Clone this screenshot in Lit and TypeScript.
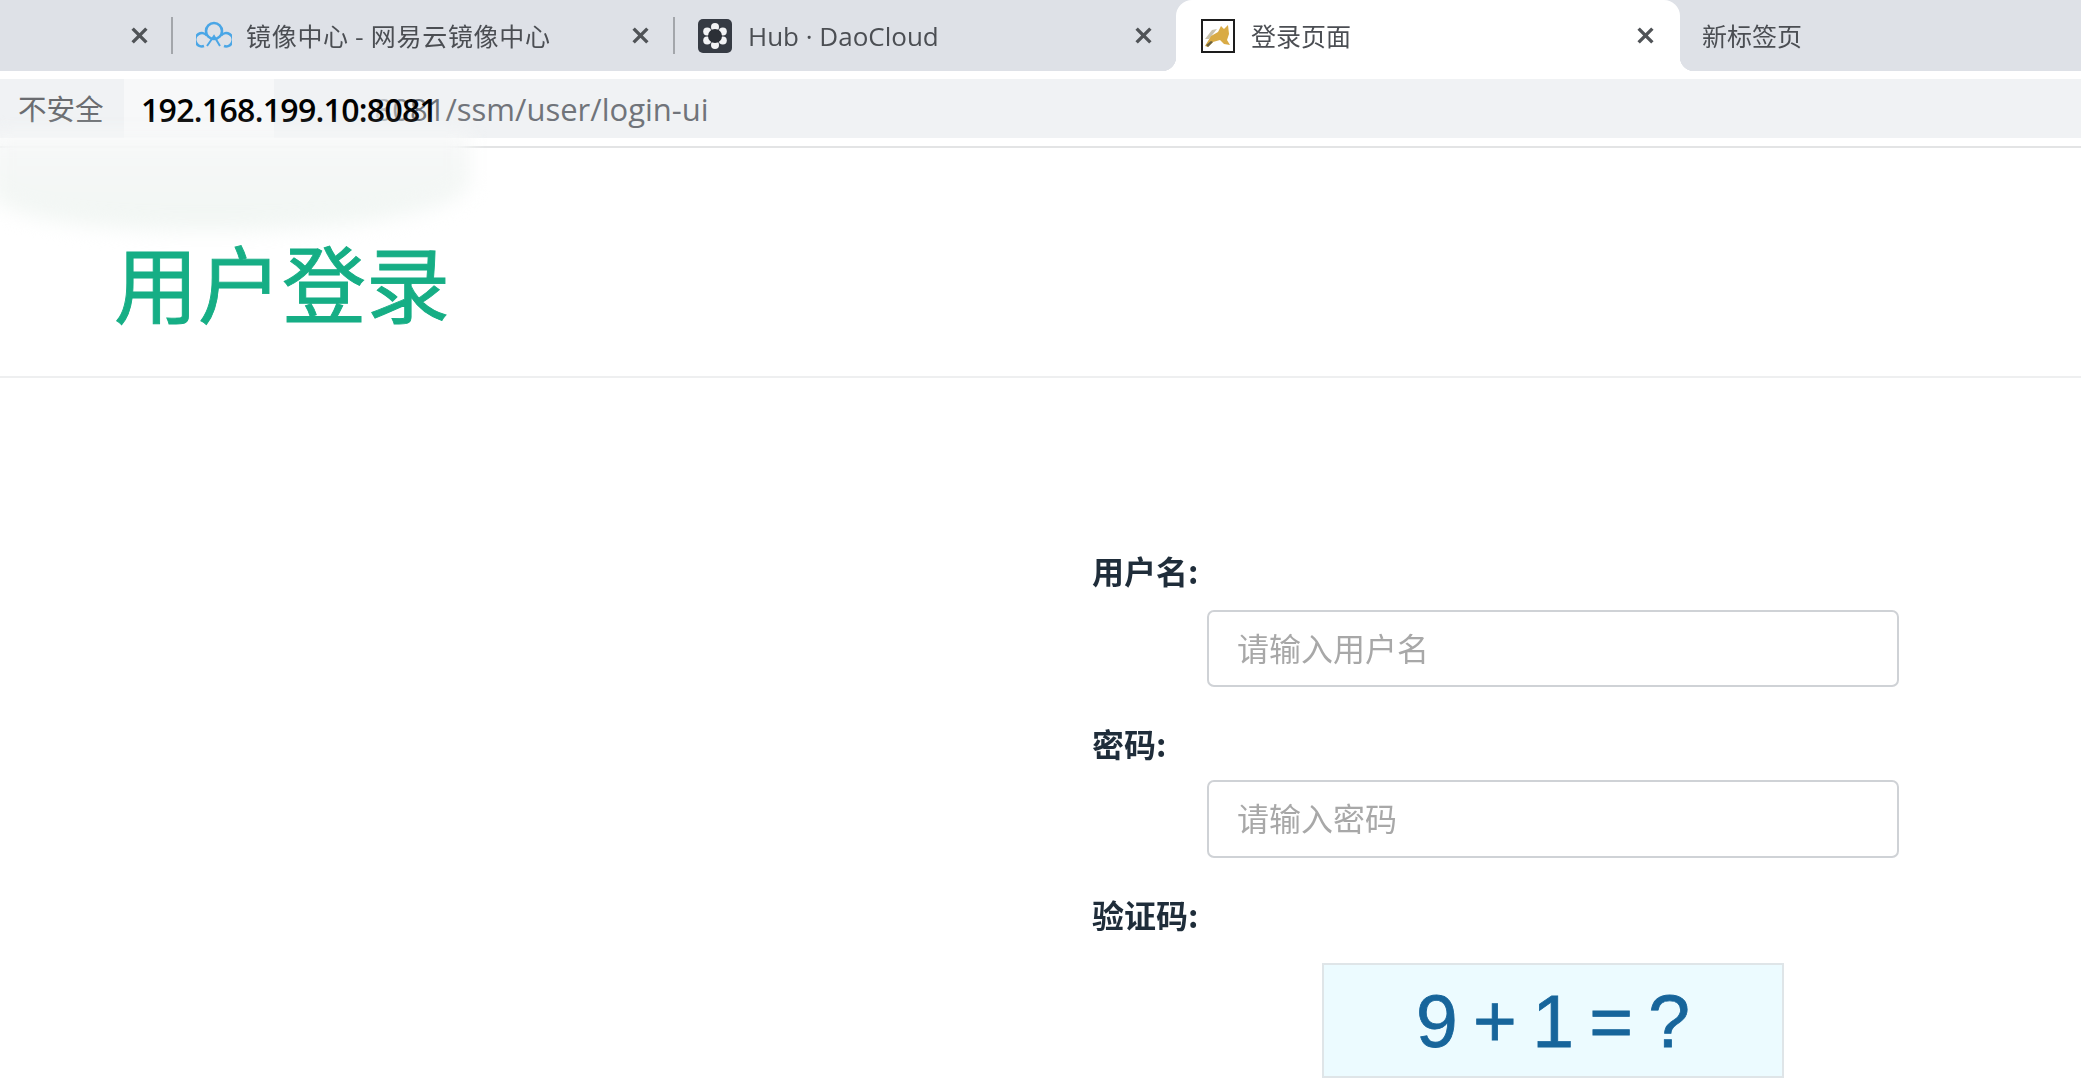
import { LitElement, html, css, svg } from "lit";
import { customElement } from "lit/decorators.js";

const closeIcon = svg`<svg class="x" viewBox="0 0 18 18" width="19" height="19"><path d="M2.5 2.5L15.5 15.5M15.5 2.5L2.5 15.5" stroke="#505357" stroke-width="3.2" fill="none"/></svg>`;

const cloudIcon = svg`<svg class="ico" viewBox="0 0 36 30" width="36" height="30" fill="none" stroke="#4aa6e6" stroke-width="2.6"><circle cx="18" cy="10" r="8"/><path d="M11 14.5A6.6 6.6 0 1 0 8 25"/><path d="M25 14.5A6.6 6.6 0 1 1 28 25"/><path d="M11 25L18 15L24 25" stroke-width="2"/></svg>`;

const hubIcon = svg`<svg class="ico" viewBox="0 0 34 34" width="34" height="34"><rect width="34" height="34" rx="5" fill="#363b44"/><g fill="#f2f3f5"><circle cx="17" cy="8" r="4"/><circle cx="9.2" cy="12.6" r="4"/><circle cx="24.8" cy="12.6" r="4"/><circle cx="9.2" cy="21.4" r="4"/><circle cx="24.8" cy="21.4" r="4"/><circle cx="17" cy="26" r="4"/></g><circle cx="17" cy="17" r="7" fill="#2b2f36"/></svg>`;

const catIcon = svg`<svg class="ico" viewBox="0 0 34 34" width="34" height="34"><rect x="1" y="1" width="32" height="32" fill="#fff" stroke="#1d1d1d" stroke-width="2"/><path d="M4 20L11 11L16 10L8 20Z" fill="#c9c2ac"/><path d="M4 27L10 17L17 13L20 7L23 10L27 6L28 15L26 21L29 26L23 25L19 21L12 23L7 28Z" fill="#d9ab45"/><path d="M7 28L12 23L10 22L5 26Z" fill="#6b6240"/></svg>`;

@customElement("app-root")
export class AppRoot extends LitElement {
  static styles = css`
    :host {
      display: block;
      position: relative;
      height: 1080px;
      overflow: hidden;
      background: #fff;
      font-family: "Noto Sans CJK SC", "Open Sans", sans-serif;
    }
    .page { filter: blur(0.7px); }
    .tabs {
      display: flex;
      align-items: center;
      height: 71px;
      background: #dee1e7;
      color: #4b4e53;
      font-size: 25px;
    }
    .tab {
      display: flex;
      align-items: center;
      height: 100%;
      box-sizing: border-box;
      padding-left: 23px;
      padding-right: 24px;
      flex: none;
      position: relative;
    }
    .tab .ico { flex: none; margin-right: 16px; }
    .tab .label { flex: 1; white-space: nowrap; line-height: 1; }
    .tab .x { flex: none; }
    .t1 { width: 171px; justify-content: flex-end; padding: 0 22px 0 0; }
    .t2 { width: 500px; padding-right: 23px; }
    .t2 .label { letter-spacing: 0.7px; }
    .t3 { width: 501px; padding-right: 23px; }
    .t4 { width: 504px; background: #fff; border-radius: 16px 16px 0 0; padding-left: 25px; padding-right: 25px; }
    .t4::before, .t4::after {
      content: "";
      position: absolute;
      bottom: 0;
      width: 14px;
      height: 14px;
    }
    .t4::before { left: -14px; background: radial-gradient(circle at 0 0, transparent 14px, #fff 14.5px); }
    .t4::after { right: -14px; background: radial-gradient(circle at 100% 0, transparent 14px, #fff 14.5px); }
    .t2 .ico { margin-right: 14px; }
    .t5 { flex: 1; padding-left: 22px; }
    .hub { font-family: "Open Sans", sans-serif; font-size: 26px; }
    .sep { width: 2px; height: 37px; background: #a3a6ab; flex: none; }
    .gap { height: 8px; background: #fff; }
    .bar {
      display: flex;
      align-items: center;
      height: 59px;
      background: #f0f2f4;
      position: relative;
      padding-left: 18px;
      font-size: 28.5px;
      color: #6a6c70;
    }
    .insecure { width: 129px; flex: none; line-height: 1; }
    .url { font-family: "Open Sans", sans-serif; font-size: 31px; white-space: nowrap; color: #70747a; }
    .host {
      position: absolute;
      left: 141px;
      top: 50%;
      transform: translateY(-50%);
      font-family: "Open Sans", sans-serif;
      font-size: 32px;
      font-weight: 600;
      letter-spacing: -0.7px;
      color: #000;
      white-space: nowrap;
    }
    .patch {
      position: absolute;
      left: 124px;
      top: 0;
      width: 290px;
      height: 100%;
      background: linear-gradient(90deg, #f7f8f9 0 150px, #f0f2f4 150px 245px, rgba(240, 242, 244, 0.55) 260px, transparent 290px);
    }
    .rule { height: 2px; background: #e3e4e5; }
    .head {
      height: 230px;
      box-sizing: border-box;
      border-bottom: 2px solid #eeeff0;
      display: flex;
      align-items: flex-end;
      padding: 0 0 53px 114px;
    }
    .title {
      margin: 0;
      font-size: 84px;
      line-height: 1;
      font-weight: 400;
      color: #16ae85;
      -webkit-text-stroke: 0.9px #16ae85;
      font-family: "Noto Sans CJK SC", sans-serif;
    }
    .smear {
      position: absolute;
      left: -10px;
      top: 134px;
      width: 480px;
      height: 96px;
      border-radius: 0 0 50% 40%;
      background: linear-gradient(#f7f8f8, #f1f6f3);
      filter: blur(10px);
    }
    .form {
      margin: 0 0 0 1092px;
      width: 807px;
      padding-top: 172px;
      color: #1f2d3a;
    }
    .lbl {
      display: block;
      height: 40px;
      line-height: 40px;
      font-size: 32px;
      font-weight: 700;
      margin-bottom: 20px;
    }
    .lbl.second { margin-bottom: 17px; }
    .lbl.third { margin-top: -2px; margin-bottom: 0; }
    .inp {
      display: block;
      box-sizing: border-box;
      margin-left: 115px;
      width: 692px;
      height: 77px;
      margin-bottom: 36px;
      padding: 0 28px 3px;
      font: 400 32px "Noto Sans CJK SC", sans-serif;
      border: 2px solid #cfd2d6;
      border-radius: 7px;
      background: #fff;
      outline: none;
    }
    .inp.tall { height: 78px; margin-bottom: 38px; padding-bottom: 4px; }
    .inp::placeholder { color: #a8a8a8; opacity: 1; }
    .cap-row { margin-left: 115px; width: 692px; display: flex; justify-content: center; margin-top: 29px; }
    .cap {
      box-sizing: border-box;
      width: 462px;
      height: 115px;
      flex: none;
      display: flex;
      align-items: center;
      justify-content: center;
      background: #ecfbff;
      border: 2px solid #dfe5e8;
      font-family: "Liberation Sans", sans-serif;
      font-size: 75px;
      word-spacing: -5.5px;
      color: #17659b;
      -webkit-text-stroke: 0.8px #17659b;
    }
  `;

  render() {
    return html`
      <div class="page">
        <div class="tabs">
          <div class="tab t1">${closeIcon}</div>
          <div class="sep"></div>
          <div class="tab t2">${cloudIcon}<span class="label">镜像中心 - 网易云镜像中心</span>${closeIcon}</div>
          <div class="sep"></div>
          <div class="tab t3">${hubIcon}<span class="label hub">Hub · DaoCloud</span>${closeIcon}</div>
          <div class="tab t4">${catIcon}<span class="label">登录页面</span>${closeIcon}</div>
          <div class="tab t5"><span class="label">新标签页</span></div>
        </div>
        <div class="gap"></div>
        <div class="bar">
          <span class="insecure">不安全</span>
          <span class="url">192.168.199.10:8081/ssm/user/login-ui</span>
          <div class="patch"></div>
          <span class="host">192.168.199.10:8081</span>
        </div>
        <div class="gap"></div>
        <div class="rule"></div>
        <div class="head"><h1 class="title">用户登录</h1></div>
        <form class="form">
          <label class="lbl">用户名:</label>
          <input class="inp" placeholder="请输入用户名" />
          <label class="lbl second">密码:</label>
          <input class="inp tall" placeholder="请输入密码" />
          <label class="lbl third">验证码:</label>
          <div class="cap-row"><div class="cap">9 + 1 = ?</div></div>
        </form>
      </div>
      <div class="smear"></div>
    `;
  }
}
